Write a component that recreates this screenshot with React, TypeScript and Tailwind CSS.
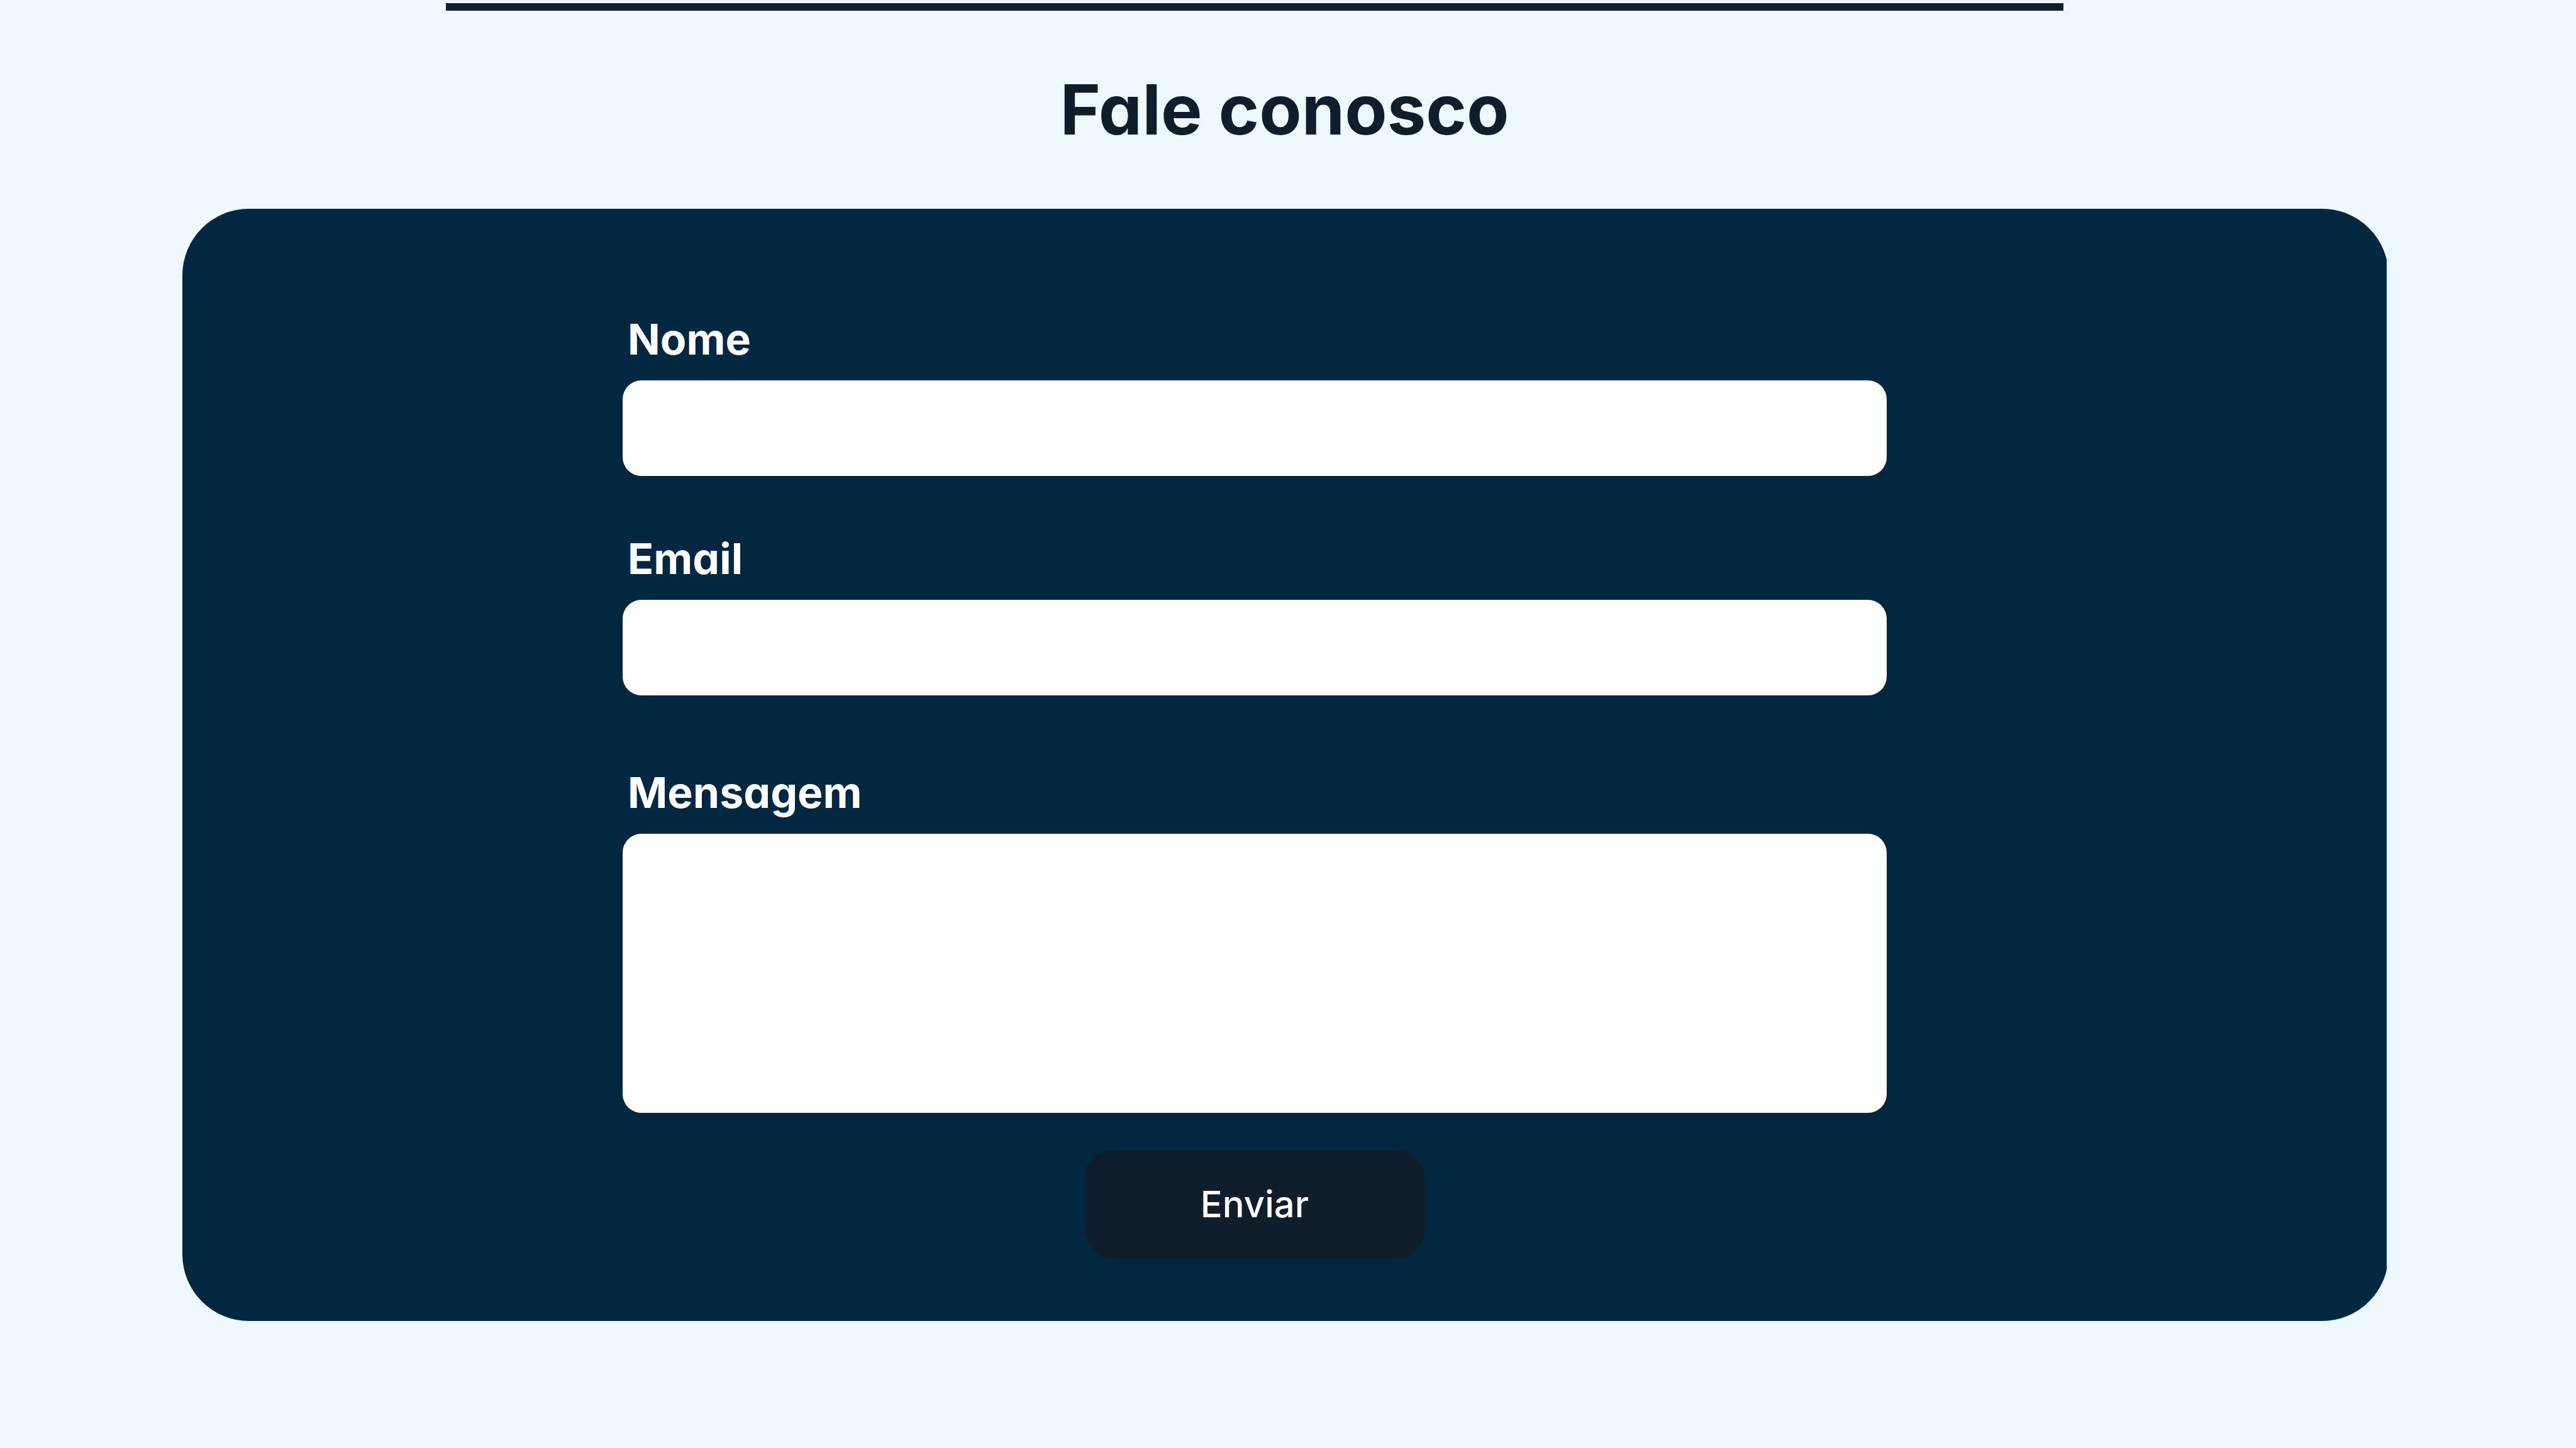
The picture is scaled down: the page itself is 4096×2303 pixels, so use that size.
import type { ReactNode } from "react";

function Field({ id, label, children }: { id: string; label: string; children: ReactNode }) {
  return (
    <div className="flex flex-col gap-[26px]">
      <label htmlFor={id} className="self-start pl-2 text-[68px] leading-[80px] font-bold text-white">
        {label}
      </label>
      {children}
    </div>
  );
}

export default function App() {
  return (
    <main className="min-h-screen bg-[#edf9ff] pt-[5px] pb-[202px] font-['Inter',sans-serif] [font-feature-settings:'cv11']">
      <hr className="mr-[815px] ml-[709px] h-3 border-0 bg-[#101e2b]" />
      <section className="mt-[97px] pr-[301px] pl-[290px]">
        <h1 className="text-center text-[110px] leading-[120px] font-bold text-[#101e2b]">Fale conosco</h1>
        <div className="mt-[98px] overflow-hidden">
          <form
            className="-mr-[3px] flex flex-col rounded-[106px] bg-[#022841] pt-[167px] pr-[798px] pb-[100px] pl-[700px]"
            onSubmit={(e) => e.preventDefault()}
          >
            <Field id="nome" label="Nome">
              <input id="nome" type="text" className="h-[152px] w-full rounded-[30px] bg-white px-10 text-[58px]" />
            </Field>
            <div className="mt-[91px]">
              <Field id="email" label="Email">
                <input id="email" type="email" className="h-[152px] w-full rounded-[30px] bg-white px-10 text-[58px]" />
              </Field>
            </div>
            <div className="mt-[114px]">
              <Field id="mensagem" label="Mensagem">
                <textarea
                  id="mensagem"
                  className="block h-[444px] w-full resize-none rounded-[30px] bg-white px-10 py-8 text-[58px]"
                />
              </Field>
            </div>
            <button
              type="submit"
              className="mt-[59px] h-[172px] w-[540px] self-center rounded-[44px] bg-[#101e2b] text-[58px] font-medium text-white [font-feature-settings:normal]"
            >
              Enviar
            </button>
          </form>
        </div>
      </section>
    </main>
  );
}
